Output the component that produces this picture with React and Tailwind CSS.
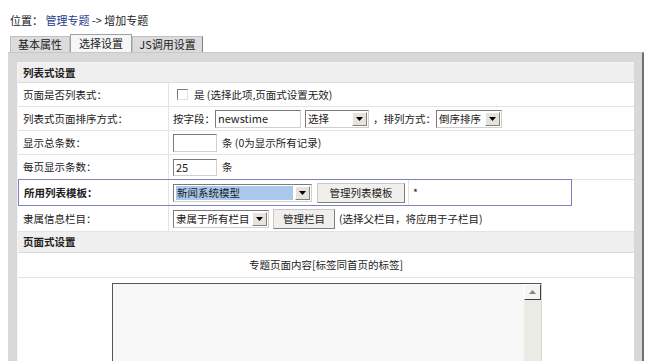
import React from 'react'

const font = { fontFamily: '"Noto Sans CJK SC", "Liberation Sans", sans-serif' }

function Select({ value, w, hi }) {
  return (
    <div className={`flex items-center h-[18px] border border-[#7a7a7a] border-r-[#d4d0c8] border-b-[#d4d0c8] bg-white whitespace-nowrap ${w}`}>
      <div className="flex-1 px-[2px] h-full flex items-center overflow-hidden">
        <span className={hi ? 'bg-[#a9c8ec] w-full pl-[1px] leading-[14px]' : 'leading-[14px]'}>{value}</span>
      </div>
      <div className="w-[15px] shrink-0 h-[14px] mr-[1px] bg-[#e6e3dc] border border-white border-r-[#808080] border-b-[#808080] flex items-center justify-center">
        <svg width="7" height="4" viewBox="0 0 7 4"><path d="M0 0h7L3.5 4z" fill="#000" /></svg>
      </div>
    </div>
  )
}

function Btn({ children, w }) {
  return (
    <div className={`h-[20px] ${w} flex items-center justify-center whitespace-nowrap bg-[#f0efeb] border border-[#c8c8c8] border-r-[#7f7f7f] border-b-[#7f7f7f]`}>
      {children}
    </div>
  )
}

function Row({ label, children, bold, h, cls = '' }) {
  return (
    <div className={`flex border-b border-[#e4e4e4] ${h} ${cls}`}>
      <div className={`w-[151px] pl-[5px] flex items-center border-r border-[#e4e4e4] ${bold ? 'font-bold' : ''}`}>{label}</div>
      <div className="flex-1 pl-[4px] flex items-center whitespace-nowrap">{children}</div>
    </div>
  )
}

export default function App() {
  return (
    <div className="w-[650px] h-[361px] overflow-hidden bg-white text-[10.5px] text-[#222]" style={font}>
      <div className="pt-[12px] pl-[10px] h-[35px] text-[11px]">
        位置： <span className="text-[#1f3a8a]">管理专题</span> -&gt; 增加专题
      </div>
      <div className="flex pl-[10px] h-[17px] items-end text-[11px]">
        <div className="w-[60px] h-[16px] bg-[#dcdcdc] border border-[#c0c0c0] border-b-0 flex items-center justify-center">基本属性</div>
        <div className="w-[62px] h-[18px] bg-[#f6f6f6] border border-[#a0a0a0] border-b-0 flex items-center justify-center">选择设置</div>
        <div className="w-[71px] h-[16px] bg-[#dcdcdc] border border-[#c0c0c0] border-r-[#808080] border-b-0 flex items-center justify-center">JS调用设置</div>
      </div>
      <div className="ml-[8px] mr-[6px] h-[310px] bg-[#d8d8d8] border-t border-[#c8c8c8] border-r-2 border-r-[#707070] pt-[9px] pl-[9px] pr-[8px]">
        <div className="bg-white h-full border-l border-t border-[#f4f4f4]">
          <div className="h-[20px] bg-[#efefef] border-b border-[#dcdcdc] pl-[5px] flex items-center font-bold">列表式设置</div>
          <Row label="页面是否列表式：" h="h-[24px]">
            <div className="w-[11px] h-[11px] border border-[#7a7a7a] border-r-[#e0e0e0] border-b-[#e0e0e0] bg-white ml-[4px] mr-[6px]" />
            是 (选择此项,页面式设置无效)
          </Row>
          <Row label="列表式页面排序方式：" h="h-[24px]">
            <span>按字段：</span>
            <div className="w-[86px] h-[18px] border border-[#7a7a7a] border-r-[#d4d0c8] border-b-[#d4d0c8] px-[2px] flex items-center mr-[4px] text-[11px]">newstime</div>
            <Select value="选择" w="w-[64px]" />
            <span className="ml-[4px]">，排列方式：</span>
            <Select value="倒序排序" w="w-[66px]" />
          </Row>
          <Row label="显示总条数：" h="h-[24px]">
            <div className="w-[44px] h-[18px] border border-[#7a7a7a] border-r-[#d4d0c8] border-b-[#d4d0c8] mr-[5px]" />
            条 (0为显示所有记录)
          </Row>
          <Row label="每页显示条数：" h="h-[25px]">
            <div className="w-[44px] h-[17px] border border-[#7a7a7a] border-r-[#d4d0c8] border-b-[#d4d0c8] px-[2px] flex items-center mr-[5px] text-[11px]">25</div>
            条
          </Row>
          <div className="flex h-[27px] border border-[#8080c0] w-[554px] -mt-[1px]">
            <div className="w-[150px] pl-[5px] flex items-center font-bold border-r border-[#e4e4e4]">所用列表模板：</div>
            <div className="flex-1 pl-[4px] flex items-center">
              <Select value="新闻系统模型" w="w-[139px]" hi />
              <div className="ml-[5px]"><Btn w="w-[88px]">管理列表模板</Btn></div>
              <div className="h-full border-l border-[#e4e4e4] ml-[3px] pl-[4px] flex items-center">*</div>
            </div>
          </div>
          <Row label="隶属信息栏目：" h="h-[26px]">
            <Select value="隶属于所有栏目" w="w-[96px]" />
            <div className="ml-[4px]"><Btn w="w-[62px]">管理栏目</Btn></div>
            <span className="ml-[4px]">(选择父栏目，将应用于子栏目)</span>
          </Row>
          <div className="h-[21px] bg-[#efefef] border-b border-[#dcdcdc] pl-[5px] flex items-center font-bold">页面式设置</div>
          <div className="h-[25px] flex items-center justify-center border-b border-[#e4e4e4]">专题页面内容[标签同首页的标签]</div>
          <div className="pt-[5px] pl-[94px]">
            <div className="w-[430px] h-[100px] border border-[#555] border-r-[#d8d8d8] border-b-[#d8d8d8] bg-[#f8f8f8] flex justify-end">
              <div className="w-[17px] bg-[#ebebe6] flex flex-col">
                <div className="h-[16px] bg-[#f4f4f2] border border-white border-r-[#404040] border-b-[#404040] flex items-center justify-center">
                  <svg width="7" height="4" viewBox="0 0 7 4"><path d="M3.5 0L7 4H0z" fill="#888" /></svg>
                </div>
              </div>
            </div>
          </div>
        </div>
      </div>
    </div>
  )
}
